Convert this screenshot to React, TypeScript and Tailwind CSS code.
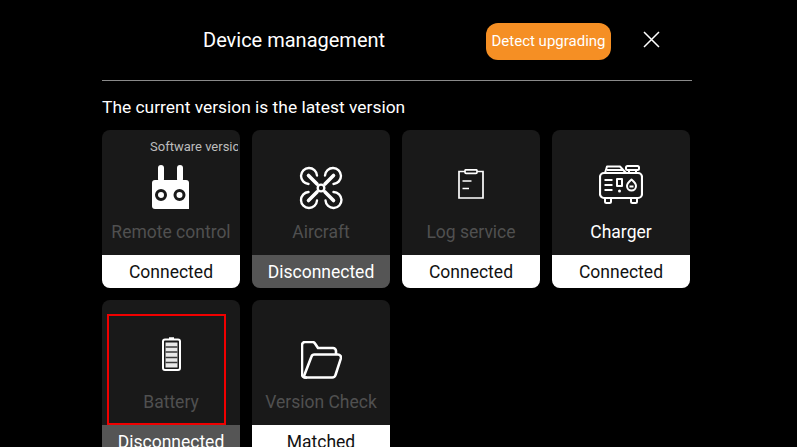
const statusStyles = {
  on: 'bg-white text-[#111]',
  off: 'bg-[#555555] text-white',
}

function RemoteIcon() {
  return (
    <svg width="38" height="44" viewBox="0 0 38 44" fill="none">
      <rect x="6" y="0" width="6" height="17" rx="3" fill="#fff" />
      <rect x="25" y="0" width="6" height="17" rx="3" fill="#fff" />
      <path d="M3 15h31a3 3 0 0 1 3 3v26H3a3 3 0 0 1-3-3V18a3 3 0 0 1 3-3z" fill="#fff" />
      <circle cx="9" cy="30" r="4.5" stroke="#1a1a1a" strokeWidth="3" />
      <circle cx="27.500" cy="30" r="4.5" stroke="#1a1a1a" strokeWidth="3" />
    </svg>
  )
}

function DroneIcon() {
  return (
    <svg width="44" height="44" viewBox="0 0 44 44" fill="none" stroke="#fff" strokeWidth="2.400" strokeLinecap="round">
      <path d="M9.500 18a8 8 0 1 1 8.500-8.500" />
      <path d="M26 9.500a8 8 0 1 1 8.500 8.500" />
      <path d="M18 34.500a8 8 0 1 1-8.500-8.500" />
      <path d="M34.500 26a8 8 0 1 1-8 8.500" />
      <path d="M9.500 9.500l8.500 8.500M34.500 9.500l-8.500 8.500M9.500 34.500l8.500-8.500M34.500 34.500l-8.500-8.500" strokeWidth="3.600" />
      <circle cx="22" cy="22" r="4.500" fill="#fff" stroke="none" />
      <circle cx="22" cy="22" r="2.200" fill="#1a1a1a" stroke="none" />
    </svg>
  )
}

function LogIcon() {
  return (
    <svg width="26" height="30" viewBox="0 0 26 30" fill="none" stroke="#fff" strokeWidth="1.700">
      <path d="M7 2.500H1v26.500h24V2.500h-6" />
      <rect x="7" y="0.800" width="12" height="3.500" rx="1" />
      <path d="M4.500 12h9M4.500 19.500h6.500" />
    </svg>
  )
}

function ChargerIcon() {
  return (
    <svg width="44" height="39" viewBox="0 0 44 39" fill="none" stroke="#fff" strokeWidth="2" strokeLinejoin="round">
      <path d="M6 8l2-6.500h13l6 6.500" />
      <path d="M8 5h16" />
      <rect x="27" y="1" width="13" height="4" rx="1.500" />
      <path d="M30 5v3M37 5v3" />
      <rect x="1" y="8" width="42" height="25" rx="4" strokeWidth="2.200" />
      <path d="M6 34v2.500a1.500 1.500 0 0 0 1.500 1.500h3a1.500 1.500 0 0 0 1.500-1.500V34M32 34v2.500a1.500 1.500 0 0 0 1.500 1.500h3a1.500 1.500 0 0 0 1.500-1.500V34" />
      <path d="M5.500 15h8M5.500 20h8M5.500 25h8" />
      <rect x="18" y="14" width="5" height="7" />
      <circle cx="20.500" cy="26" r="1.500" fill="#fff" stroke="none" />
      <path d="M32.500 14.500c-3 2.500-4.500 4.500-4.500 6.500a4.500 4.500 0 0 0 9 0c0-2-1.500-4-4.500-6.500z" />
      <path d="M30.500 21.500h4" />
    </svg>
  )
}

function BatteryIcon() {
  return (
    <svg width="19" height="34" viewBox="0 0 19 34" fill="none" stroke="#fff">
      <path d="M7 1.200h5" strokeWidth="2" />
      <rect x="1" y="2.500" width="17" height="30.500" rx="2" strokeWidth="2" />
      <rect x="3.500" y="5.500" width="12" height="25" fill="#e8e8e8" stroke="none" />
      <path d="M3.500 10h12M3.500 15h12M3.500 20.500h12M3.500 25.500h12" stroke="#3a3a3a" strokeWidth="1.300" />
    </svg>
  )
}

function FolderIcon() {
  return (
    <svg width="41" height="38" viewBox="0 0 41 38" fill="none" stroke="#fff" strokeWidth="2.600" strokeLinejoin="round">
      <path d="M6 36.500H4a3 3 0 0 1-3-3V4a3 3 0 0 1 3-3h7.500a3 3 0 0 1 2.500 1.500L17 7h15a3 3 0 0 1 3 3v3" />
      <path d="M10.500 15.500a3 3 0 0 1 2.800-2H37a3 3 0 0 1 2.900 3.800L34.500 34a3.500 3.500 0 0 1-3.300 2.500H4.500c-1.500 0-1.700-1-1.300-2z" />
    </svg>
  )
}

const devices = [
  { name: 'Remote control', status: 'Connected', tone: 'on' as const, icon: <RemoteIcon />, top: 'pt-[35px]', active: false },
  { name: 'Aircraft', status: 'Disconnected', tone: 'off' as const, icon: <DroneIcon />, top: 'pt-[36px]', active: false },
  { name: 'Log service', status: 'Connected', tone: 'on' as const, icon: <LogIcon />, top: 'pt-[39px]', active: false },
  { name: 'Charger', status: 'Connected', tone: 'on' as const, icon: <ChargerIcon />, top: 'pt-[35px]', active: true },
  { name: 'Battery', status: 'Disconnected', tone: 'off' as const, icon: <BatteryIcon />, top: 'pt-[37px]', active: false },
  { name: 'Version Check', status: 'Matched', tone: 'on' as const, icon: <FolderIcon />, top: 'pt-[41px]', active: false },
]

export default function App() {
  return (
    <div className="h-[447px] w-[797px] overflow-hidden bg-black pl-[102px] font-['Roboto',sans-serif]">
      <div className="w-[590px]">
        <header className="flex h-[81px] items-start border-b border-[#8a8a8a]">
          <h1 className="mt-[28px] ml-[101px] text-[20px] leading-[24px] font-normal text-white">Device management</h1>
          <button className="mt-[23px] ml-auto flex h-[37px] w-[125px] items-center justify-center rounded-[12px] bg-[#f58f24] text-[15px] text-white">
            Detect upgrading
          </button>
          <svg className="mt-[31px] mr-[32px] ml-[32px]" width="17" height="17" viewBox="0 0 17 17" stroke="#fff" strokeWidth="1.500">
            <path d="M1 1l15 15M16 1L1 16" />
          </svg>
        </header>
        <p className="mt-[15px] text-[17.4px] leading-[22px] text-white">The current version is the latest version</p>
        <div className="mt-[12px] grid w-[588px] grid-cols-4 gap-3">
          {devices.map((d, i) => (
            <div key={d.name} className="relative flex h-[158px] flex-col overflow-hidden rounded-[8px] bg-[#191919]">
              {i === 0 && (
                <span className="absolute top-[9px] left-[48px] w-[88px] overflow-hidden text-[13px] leading-[16px] whitespace-nowrap text-[#bdbdbd]">
                  Software version
                </span>
              )}
              {i === 4 && <div className="absolute top-[14px] left-[5px] h-[111px] w-[119px] border-2 border-[#f00000]" />}
              <div className="flex h-[125px] flex-col items-center">
                <div className={`flex h-[88px] items-start justify-center ${d.top}`}>{d.icon}</div>
                <span className={`mt-[2px] text-[17.5px] leading-[24px] ${d.active ? 'text-white' : 'text-[#505050]'}`}>{d.name}</span>
              </div>
              <div className={`flex h-[33px] items-center justify-center pt-[2px] text-[17.5px] ${statusStyles[d.tone]}`}>{d.status}</div>
            </div>
          ))}
        </div>
      </div>
    </div>
  )
}
